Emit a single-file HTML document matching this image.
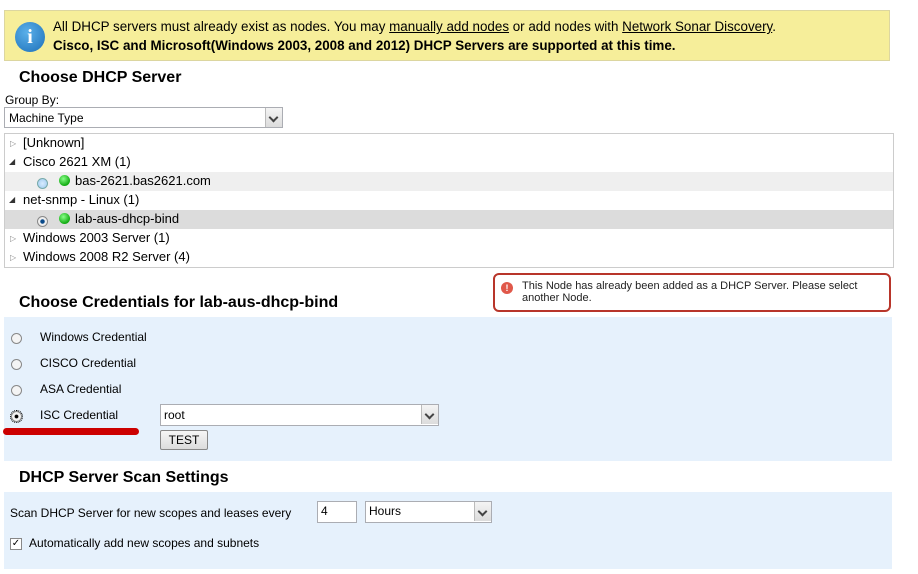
<!DOCTYPE html>
<html><head><style>
*{margin:0;padding:0;box-sizing:border-box}
body{width:918px;height:574px;background:#fff;font-family:"Liberation Sans",Arial,sans-serif;font-size:12px;color:#000;position:relative;overflow:hidden}
.a{position:absolute;white-space:nowrap}
h2{position:absolute;font-size:16px;font-weight:bold;left:19px}
.radio{position:absolute;width:11px;height:11px;border-radius:50%;border:1px solid #888;background:#f4f4f4}
.sel{position:absolute;background:#fff;border:1px solid #abadb3;height:21px}
.sel .arr{position:absolute;right:0;top:0;width:17px;height:19px;background:linear-gradient(#f4f4f4,#dcdcdc);border-left:1px solid #bbb}
.sel .arr:after{content:"";position:absolute;left:4px;top:6px;width:5px;height:5px;border-right:2px solid #444;border-bottom:2px solid #444;transform:rotate(45deg)}
.tri{position:absolute;font-size:8px;color:#888}
.dot{position:absolute;width:11px;height:11px;border-radius:50%;background:radial-gradient(circle at 40% 35%,#8f8,#1a1 70%)}
</style></head><body>
<div class="a" style="left:4px;top:10px;width:886px;height:51px;background:#f6ee9a;border:1px solid #dcd6a0"></div>
<div class="a" style="left:15px;top:22px;width:30px;height:30px;border-radius:50%;background:radial-gradient(circle at 40% 35%,#5ab0ea,#1d6fb8);color:#fff;font:bold 20px 'Liberation Serif',serif;text-align:center;line-height:30px">i</div>
<div class="a" style="left:53px;top:19px;font-size:13.4px">All DHCP servers must already exist as nodes. You may <u>manually add nodes</u> or add nodes with <u>Network Sonar Discovery</u>.</div>
<div class="a" style="left:53px;top:38px;font-size:13.4px;font-weight:bold">Cisco, ISC and Microsoft(Windows 2003, 2008 and 2012) DHCP Servers are supported at this time.</div>

<h2 style="top:69px">Choose DHCP Server</h2>
<div class="a" style="left:5px;top:93px">Group By:</div>
<div class="sel" style="left:4px;top:107px;width:279px"><span class="a" style="left:4px;top:3px">Machine Type</span><div class="arr"></div></div>

<div class="a" style="left:4px;top:133px;width:890px;height:135px;border:1px solid #ccc"></div>
<div class="a" style="left:5px;top:172px;width:888px;height:19px;background:#efefef"></div>
<div class="a" style="left:5px;top:210px;width:888px;height:19px;background:#dcdcdc"></div>
<span class="tri" style="left:10px;top:139px">▷</span><div class="a" style="left:23px;top:135px;font-size:13px">[Unknown]</div>
<span class="tri" style="left:9px;top:157px;color:#333">◢</span><div class="a" style="left:23px;top:154px;font-size:13px">Cisco 2621 XM (1)</div>
<div class="radio" style="left:37px;top:178px;background:radial-gradient(#d8ecff,#9cc8ee);border-color:#7aa"></div><div class="dot" style="left:59px;top:175px"></div><div class="a" style="left:75px;top:173px;font-size:13px">bas-2621.bas2621.com</div>
<span class="tri" style="left:9px;top:195px;color:#333">◢</span><div class="a" style="left:23px;top:192px;font-size:13px">net-snmp - Linux (1)</div>
<div class="radio" style="left:37px;top:216px;background:radial-gradient(#0a4a8a 30%,#eee 40%)"></div><div class="dot" style="left:59px;top:213px"></div><div class="a" style="left:75px;top:211px;font-size:13px">lab-aus-dhcp-bind</div>
<span class="tri" style="left:10px;top:234px">▷</span><div class="a" style="left:23px;top:230px;font-size:13px">Windows 2003 Server (1)</div>
<span class="tri" style="left:10px;top:253px">▷</span><div class="a" style="left:23px;top:249px;font-size:13px">Windows 2008 R2 Server (4)</div>

<div class="a" style="left:493px;top:273px;width:398px;height:39px;border:2px solid #b8352a;border-radius:6px;background:#fff"></div>
<div class="a" style="left:501px;top:282px;width:12px;height:12px;border-radius:50%;background:#e0584a;color:#fff;font:bold 9px sans-serif;text-align:center;line-height:12px">!</div>
<div class="a" style="left:522px;top:280px;font-size:11px;color:#222;line-height:12px;white-space:normal;width:360px">This Node has already been added as a DHCP Server. Please select another Node.</div>

<h2 style="top:294px">Choose Credentials for lab-aus-dhcp-bind</h2>
<div class="a" style="left:4px;top:317px;width:888px;height:144px;background:#e6f1fc"></div>
<div class="radio" style="left:11px;top:333px"></div><div class="a" style="left:40px;top:330px">Windows Credential</div>
<div class="radio" style="left:11px;top:359px"></div><div class="a" style="left:40px;top:356px">CISCO Credential</div>
<div class="radio" style="left:11px;top:385px"></div><div class="a" style="left:40px;top:382px">ASA Credential</div>
<div class="radio" style="left:11px;top:411px;background:radial-gradient(#000 25%,#f4f4f4 35%);outline:1px dotted #000"></div><div class="a" style="left:40px;top:408px">ISC Credential</div>
<div class="a" style="left:3px;top:428px;width:136px;height:7px;background:#c00;border-radius:4px"></div>
<div class="sel" style="left:160px;top:404px;width:279px;height:22px"><span class="a" style="left:3px;top:3px">root</span><div class="arr"></div></div>
<div class="a" style="left:160px;top:430px;width:48px;height:20px;border:1px solid #888;border-radius:2px;background:linear-gradient(#f6f6f6,#dcdcdc);text-align:center;line-height:18px">TEST</div>

<h2 style="top:469px">DHCP Server Scan Settings</h2>
<div class="a" style="left:4px;top:492px;width:888px;height:77px;background:#e6f1fc"></div>
<div class="a" style="left:10px;top:506px">Scan DHCP Server for new scopes and leases every</div>
<div class="a" style="left:317px;top:501px;width:40px;height:22px;background:#fff;border:1px solid #abadb3;padding:2px 3px">4</div>
<div class="sel" style="left:365px;top:501px;width:127px;height:22px"><span class="a" style="left:3px;top:2px">Hours</span><div class="arr"></div></div>
<div class="a" style="left:10px;top:538px;width:12px;height:12px;border:1px solid #888;background:#fff;font-size:10px;line-height:10px;text-align:center">✓</div>
<div class="a" style="left:29px;top:536px">Automatically add new scopes and subnets</div>
</body></html>
